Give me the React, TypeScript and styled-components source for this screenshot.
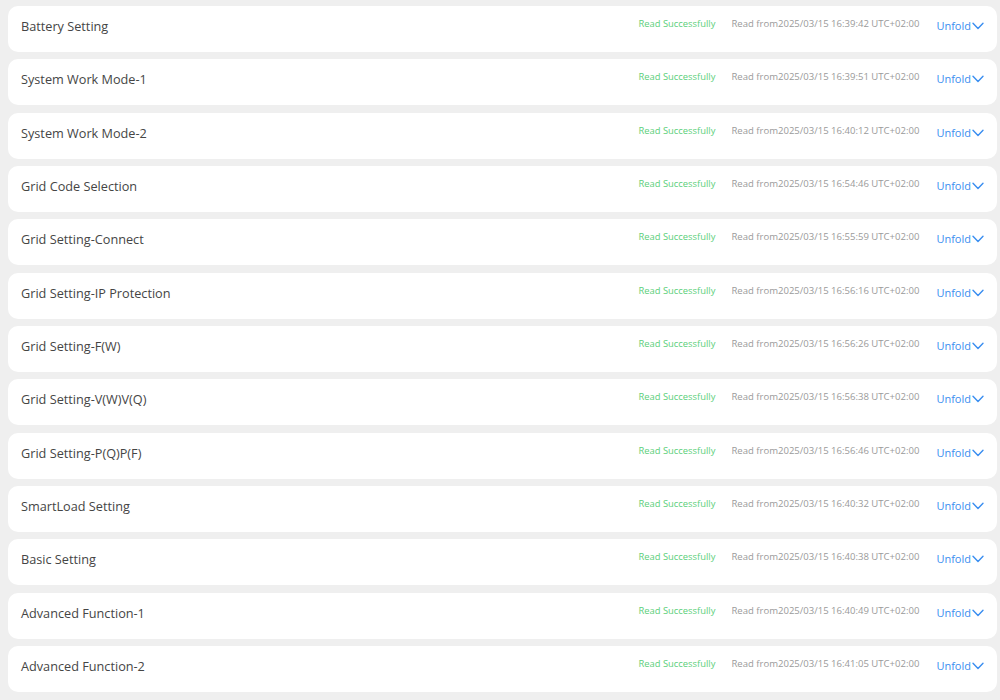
import React from "react";
import styled, { createGlobalStyle } from "styled-components";

const Global = createGlobalStyle`
  html, body { margin: 0; padding: 0; background: #efefef; }
  body { font-family: "Open Sans", "Noto Sans", sans-serif; }
`;

const List = styled.div`
  display: flex;
  flex-direction: column;
  gap: 7.33px;
  padding: 6px 3px 0 8px;
`;

const Card = styled.div`
  height: 46px;
  box-sizing: border-box;
  background: #ffffff;
  border-radius: 10px;
  display: flex;
  align-items: flex-start;
  padding: 11px 13px 0 13px;
`;

const Title = styled.div`
  flex: 1;
  font-size: 12.7px;
  line-height: 18px;
  color: #454545;
`;

const Status = styled.span`
  font-size: 9.4px;
  line-height: 14px;
  color: #5ccf7a;
`;

const Time = styled.span`
  font-size: 9.55px;
  line-height: 14px;
  color: #9a9a9a;
  margin-left: 16px;
`;

const Unfold = styled.button`
  display: flex;
  align-items: center;
  border: none;
  background: none;
  padding: 0;
  margin-left: 17px;
  margin-top: 2px;
  font-family: inherit;
  font-size: 11px;
  line-height: 14px;
  color: #3a8ef0;
  cursor: pointer;
  svg { margin-left: 1px; }
`;

const rows: [string, string][] = [
  ["Battery Setting", "2025/03/15 16:39:42"],
  ["System Work Mode-1", "2025/03/15 16:39:51"],
  ["System Work Mode-2", "2025/03/15 16:40:12"],
  ["Grid Code Selection", "2025/03/15 16:54:46"],
  ["Grid Setting-Connect", "2025/03/15 16:55:59"],
  ["Grid Setting-IP Protection", "2025/03/15 16:56:16"],
  ["Grid Setting-F(W)", "2025/03/15 16:56:26"],
  ["Grid Setting-V(W)V(Q)", "2025/03/15 16:56:38"],
  ["Grid Setting-P(Q)P(F)", "2025/03/15 16:56:46"],
  ["SmartLoad Setting", "2025/03/15 16:40:32"],
  ["Basic Setting", "2025/03/15 16:40:38"],
  ["Advanced Function-1", "2025/03/15 16:40:49"],
  ["Advanced Function-2", "2025/03/15 16:41:05"],
];

const Chevron = () => (
  <svg width="12" height="8" viewBox="0 0 12 8" fill="none">
    <path d="M1 1.2 L6 6.5 L11 1.2" stroke="#3a8ef0" strokeWidth="1.4" strokeLinecap="round" strokeLinejoin="round" />
  </svg>
);

export default function App() {
  return (
    <>
      <Global />
      <List>
        {rows.map(([title, time]) => (
          <Card key={title}>
            <Title>{title}</Title>
            <Status>Read Successfully</Status>
            <Time>Read from{time} UTC+02:00</Time>
            <Unfold>
              Unfold
              <Chevron />
            </Unfold>
          </Card>
        ))}
      </List>
    </>
  );
}
